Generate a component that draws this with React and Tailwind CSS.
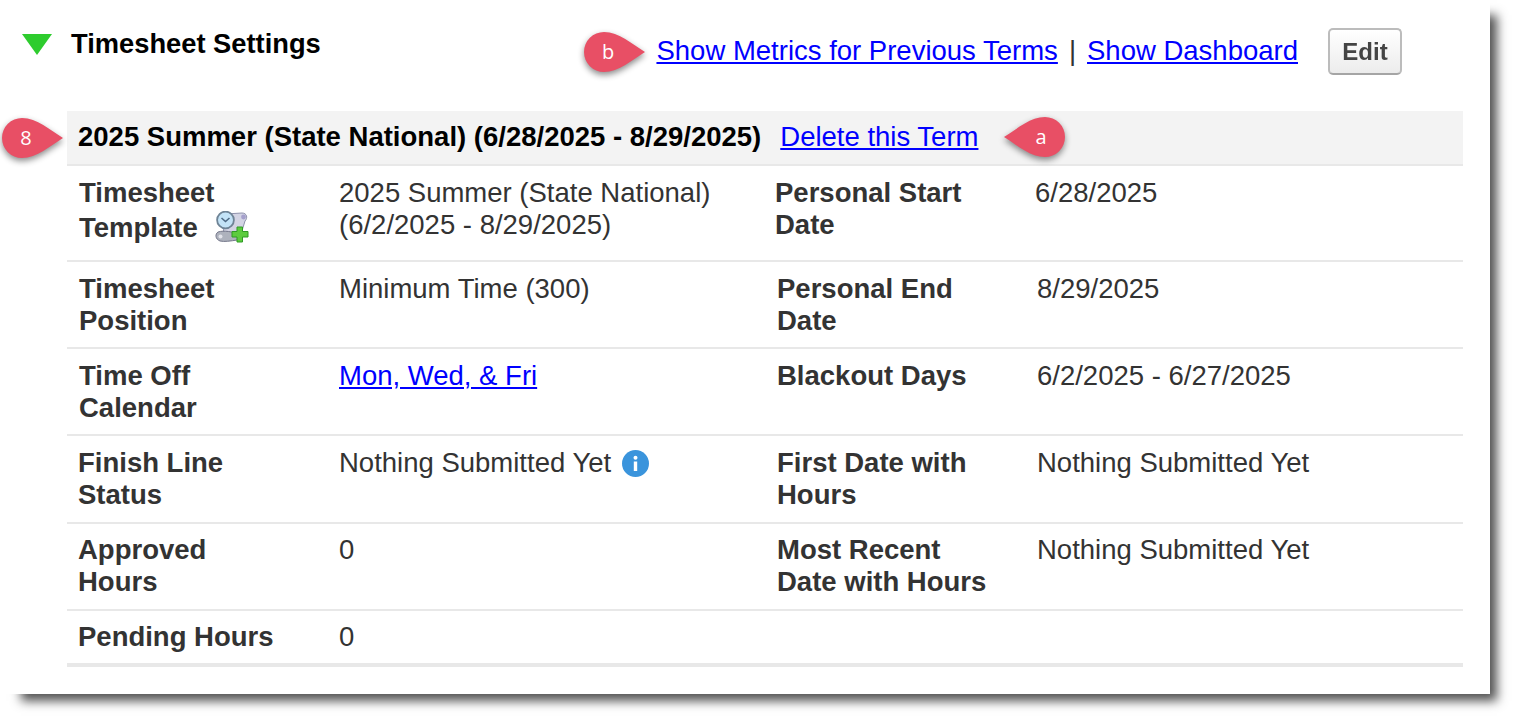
import React from "react";

const rows = [
    { h: "h-[96px]", cols: "grid-cols-[272px_436px_260px_1fr]", pl: "pl-[12px]" },
    { h: "h-[87px]", cols: "grid-cols-[272px_438px_260px_1fr]", pl: "pl-[12px]" },
    { h: "h-[87px]", cols: "grid-cols-[272px_438px_260px_1fr]", pl: "pl-[12px]" },
    { h: "h-[88px]", cols: "grid-cols-[272px_438px_260px_1fr]", pl: "pl-[11px]" },
    { h: "h-[87px]", cols: "grid-cols-[272px_438px_260px_1fr]", pl: "pl-[11px]" },
];

function Bubble({ label, flip, className }) {
    return (
        <div className={`absolute w-[63px] h-[40px] ${className}`}>
            <svg
                width="63"
                height="40"
                viewBox="0 0 63 40"
                className={`overflow-visible drop-shadow-[0px_3px_3px_rgba(0,0,0,0.45)] ${flip ? "-scale-x-100" : ""}`}
            >
                <path d="M21 0C36 0 49 12 62 20C49 28 36 40 21 40A20 20 0 0 1 21 0Z" fill="#e84f65" />
            </svg>
            <span
                className={`absolute top-[7px] w-[50px] text-center text-[20px] leading-[26px] text-white font-['Open_Sans',sans-serif] ${flip ? "right-0" : "left-0"}`}
            >
                {label}
            </span>
        </div>
    );
}

function TemplateIcon() {
    return (
        <svg width="34" height="32" viewBox="0 0 34 32" className="ml-[17px] mt-[-3px] shrink-0">
            <path d="M10 3L27 2C32 2 33 7 30 10L26 23L8 26Z" fill="#d3d4e4" stroke="#8f92ac" strokeWidth="1" />
            <circle cx="28.5" cy="6" r="2.4" fill="#a5a0cc" />
            <path d="M3 21C9 19 18 21 24 23L22 29C16 30 9 31 5 30C0 28 0 23 3 21Z" fill="#aeb2bd" stroke="#74778a" strokeWidth="1" />
            <circle cx="5.5" cy="25.5" r="2" fill="#e2e3ea" />
            <circle cx="10.5" cy="9" r="8.4" fill="#c3e3f7" stroke="#6f8496" strokeWidth="1.8" />
            <path d="M6.5 7L10.5 10.5L14.5 7" fill="none" stroke="#4f6b86" strokeWidth="1.6" />
            <path d="M22 16H27.5V20.5H33V26H27.5V31H22V26H17V20.5H22Z" fill="#5ccc3e" stroke="#2f9a25" strokeWidth="1" />
        </svg>
    );
}

function InfoIcon() {
    return (
        <svg width="27" height="27" viewBox="0 0 27 27" className="ml-[11px] shrink-0">
            <circle cx="13.5" cy="13.5" r="13.5" fill="#3a94dc" />
            <circle cx="13.5" cy="7.8" r="2" fill="#fff" />
            <rect x="11.8" y="11.5" width="3.4" height="9.5" fill="#fff" />
        </svg>
    );
}

const link = "text-[#0000ff] underline";

export default function App() {
    const cells = [
        [
            <>
                Timesheet
                <br />
                <span className="flex items-center h-[32px] mt-[3px]">
                    Template
                    <TemplateIcon />
                </span>
            </>,
            <>
                2025 Summer (State National)
                <br />
                (6/2/2025 - 8/29/2025)
            </>,
            <>
                Personal Start
                <br />
                Date
            </>,
            "6/28/2025",
        ],
        [
            <>
                Timesheet
                <br />
                Position
            </>,
            "Minimum Time (300)",
            <>
                Personal End
                <br />
                Date
            </>,
            "8/29/2025",
        ],
        [
            <>
                Time Off
                <br />
                Calendar
            </>,
            <a className={link}>Mon, Wed, &amp; Fri</a>,
            "Blackout Days",
            "6/2/2025 - 6/27/2025",
        ],
        [
            <>
                Finish Line
                <br />
                Status
            </>,
            <span className="flex items-center h-[32px]">
                Nothing Submitted Yet
                <InfoIcon />
            </span>,
            <>
                First Date with
                <br />
                Hours
            </>,
            "Nothing Submitted Yet",
        ],
        [
            <>
                Approved
                <br />
                Hours
            </>,
            "0",
            <>
                Most Recent
                <br />
                Date with Hours
            </>,
            "Nothing Submitted Yet",
        ],
    ];

    return (
        <div className="relative w-[1513px] h-[717px] bg-white overflow-hidden font-['Liberation_Sans',Arial,sans-serif] text-[27.5px] leading-[32px] text-[#333]">
            <div className="ml-[6px] w-[1484px] h-[694px] bg-white shadow-[11px_11px_10px_-4px_rgba(0,0,0,0.68)]">
                {/* Top bar */}
                <div className="flex h-[111px] items-start pr-[88px]">
                    <svg width="30" height="21" viewBox="0 0 30 21" className="ml-[16px] mt-[34px] shrink-0 blur-[0.6px]">
                        <path d="M0 0H30L15 21Z" fill="#2ecc2e" />
                    </svg>
                    <h2 className="ml-[19px] mt-[28px] text-[27.3px] font-bold text-black">Timesheet Settings</h2>
                    <div className="ml-auto mt-[35px] flex">
                        <a className={link}>Show Metrics for Previous Terms</a>
                        <span className="mx-[11px] text-[#333]">|</span>
                        <a className={link}>Show Dashboard</a>
                    </div>
                    <button className="ml-[30px] mt-[28px] w-[74px] h-[47px] rounded-[5px] border-2 border-[#bcbcbc] border-b-[#a5a5a5] bg-gradient-to-b from-white to-[#ececec] text-[24px] font-bold text-[#444] blur-[0.5px]">
                        Edit
                    </button>
                </div>

                {/* Term table */}
                <div className="ml-[61px] w-[1396px]">
                    <div className="flex h-[55px] items-center border-b-2 border-[#e8e8e8] bg-[#f3f3f3] pl-[11px] pb-[2px]">
                        <span className="font-bold text-black">2025 Summer (State National) (6/28/2025 - 8/29/2025)</span>
                        <a className={`${link} ml-[19px]`}>Delete this Term</a>
                    </div>

                    {rows.map((row, i) => (
                        <div
                            key={i}
                            className={`grid ${row.cols} ${row.h} border-b-2 border-[#e8e8e8] ${i === 4 ? "pt-[10px]" : "pt-[11px]"}`}
                        >
                            <div className={`font-bold text-[#333] ${row.pl}`}>{cells[i][0]}</div>
                            <div>{cells[i][1]}</div>
                            <div className="font-bold text-[#333]">{cells[i][2]}</div>
                            <div>{cells[i][3]}</div>
                        </div>
                    ))}

                    <div className="grid h-[56px] grid-cols-[272px_1fr] border-b-4 border-[#e8e8e8] pt-[10px]">
                        <div className="pl-[11px] font-bold text-[#333]">Pending Hours</div>
                        <div>0</div>
                    </div>
                </div>
            </div>

            <Bubble label="8" className="left-[1px] top-[118px]" />
            <Bubble label="b" className="left-[583px] top-[32px]" />
            <Bubble label="a" flip className="left-[1003px] top-[117px]" />
        </div>
    );
}
